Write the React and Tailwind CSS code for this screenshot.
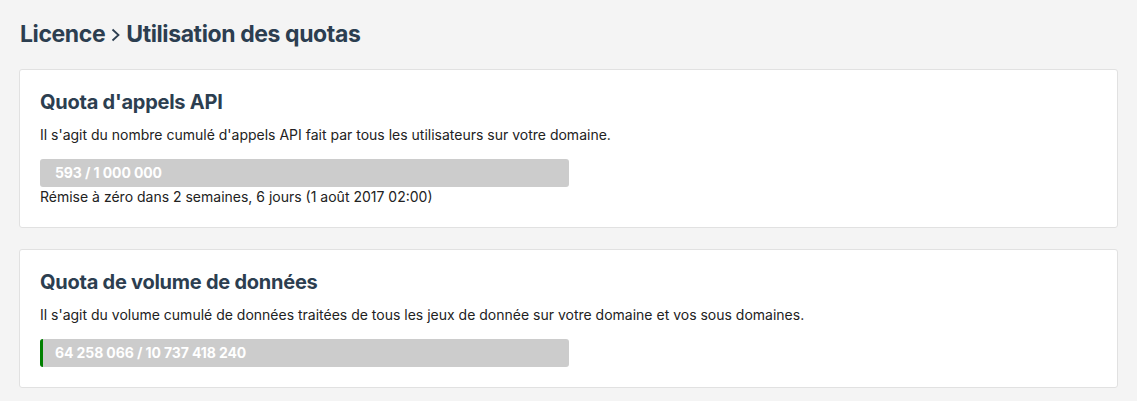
import React from "react";

const font = { fontFamily: "Inter, 'Liberation Sans', Arial, sans-serif" };

function Bar({ label, pct }) {
  return (
    <div className="relative mt-[14px] h-[28px] w-1/2 overflow-hidden rounded-[3px] bg-[#cccccc]">
      {pct > 0 && <div className="absolute left-0 top-0 h-full bg-[#008000]" style={{ width: `${pct}%` }} />}
      <div className="relative pl-[15px] text-[14px] font-bold leading-[28px] tracking-[-0.1px] text-white">{label}</div>
    </div>
  );
}

function Card({ title, desc, children, className = "" }) {
  return (
    <div className={"rounded-[3px] border border-[#e1e1e1] bg-white p-5 " + className}>
      <h3 className="text-[20px] font-bold leading-[24px] tracking-[-0.25px] text-[#2c3e50]">{title}</h3>
      <p className="mt-[11px] text-[14px] leading-[20px] text-[#222]">{desc}</p>
      {children}
    </div>
  );
}

export default function App() {
  return (
    <div className="min-h-[401px] bg-[#f4f4f4] px-[19px] pt-5 pb-4" style={font}>
      <h1 className="flex items-center pl-px text-[23px] font-bold leading-[28px] tracking-[-0.4px] text-[#2c3e50]">
        <span>Licence</span>
        <svg className="mx-[6px] mt-[2px]" width="9" height="14" viewBox="0 0 9 14" fill="none">
          <polyline points="1.5,1.5 7.5,7 1.5,12.5" stroke="#2c3e50" strokeWidth="1.8" />
        </svg>
        <span>Utilisation des quotas</span>
      </h1>
      <Card
        className="mt-[21px]"
        title="Quota d'appels API"
        desc="Il s'agit du nombre cumulé d'appels API fait par tous les utilisateurs sur votre domaine."
      >
        <Bar label="593 / 1 000 000" pct={0} />
        <p className="text-[14px] leading-[20px] text-[#222]">
          Rémise à zéro dans 2 semaines, 6 jours (1 août 2017 02:00)
        </p>
      </Card>
      <Card
        className="mt-[21px]"
        title="Quota de volume de données"
        desc="Il s'agit du volume cumulé de données traitées de tous les jeux de donnée sur votre domaine et vos sous domaines."
      >
        <Bar label="64 258 066 / 10 737 418 240" pct={0.6} />
      </Card>
    </div>
  );
}
